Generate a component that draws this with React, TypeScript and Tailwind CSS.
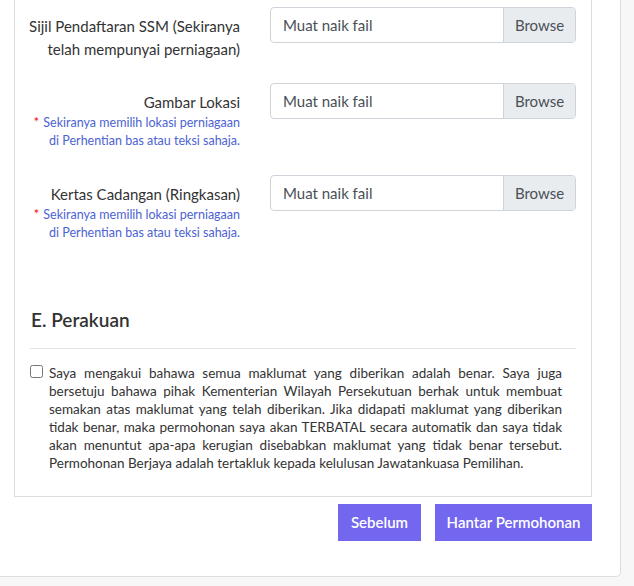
import React from "react";

const font = { fontFamily: "Lato, 'Open Sans', sans-serif" };

function FileInput() {
  return (
    <div className="flex h-[36px] w-[306px] overflow-hidden rounded-[4px] border border-[#ced4da] bg-white">
      <div className="flex flex-1 items-center pl-[12px] text-[15px] text-[#495057]">Muat naik fail</div>
      <div className="flex w-[72px] items-center justify-center border-l border-[#ced4da] bg-[#e9ecef] text-[15px] text-[#495057]">
        Browse
      </div>
    </div>
  );
}

function Note() {
  return (
    <div className="text-[12.5px] leading-[18px] text-[#4c63d2]">
      <div>
        <span className="mr-[1px] text-[#ff0000]">*</span> Sekiranya memilih lokasi perniagaan
      </div>
      <div>di Perhentian bas atau teksi sahaja.</div>
    </div>
  );
}

const lines = [
  "Saya mengakui bahawa semua maklumat yang diberikan adalah benar. Saya juga",
  "bersetuju bahawa pihak Kementerian Wilayah Persekutuan berhak untuk membuat",
  "semakan atas maklumat yang telah diberikan. Jika didapati maklumat yang diberikan",
  "tidak benar, maka permohonan saya akan TERBATAL secara automatik dan saya tidak",
  "akan menuntut apa-apa kerugian disebabkan maklumat yang tidak benar tersebut.",
];

export default function App() {
  return (
    <div className="h-[586px] w-[634px] overflow-hidden bg-[#f7f7f7]" style={font}>
      <div className="h-[577px] w-[621px] rounded-br-[5px] border-r border-b border-[#dddddd] bg-white">
        <div className="ml-[14px] h-[497px] w-[578px] border-x border-b border-[#dddddd] pt-[7px]">
          <div className="flex flex-col">
            <div className="mb-[22px] flex items-start">
              <div className="w-[225px] pt-[8px] text-right text-[15px] leading-[23px] text-[#333333]">
                Sijil Pendaftaran SSM (Sekiranya telah mempunyai perniagaan)
              </div>
              <div className="ml-[30px]">
                <FileInput />
              </div>
            </div>
            <div className="mb-[25px] flex items-start">
              <div className="w-[225px] pt-[8px] text-right text-[15px] leading-[23px] text-[#333333]">
                Gambar Lokasi
                <Note />
              </div>
              <div className="ml-[30px]">
                <FileInput />
              </div>
            </div>
            <div className="flex items-start">
              <div className="w-[225px] pt-[8px] text-right text-[15px] leading-[23px] text-[#333333]">
                Kertas Cadangan (Ringkasan)
                <Note />
              </div>
              <div className="ml-[30px]">
                <FileInput />
              </div>
            </div>
          </div>
          <div className="ml-[15px] mr-[15px] mt-[66px] border-b border-[#e5e5e5] pb-[16px]">
            <h2 className="pl-[1px] text-[19px] font-semibold leading-[24px] text-[#333333]">E. Perakuan</h2>
          </div>
          <div className="mt-[15px] flex items-start pl-[15px] pr-[29px]">
            <input type="checkbox" className="mt-[1px] h-[13px] w-[13px] shrink-0" />
            <div className="ml-[6px] flex-1 text-[13.5px] leading-[18px] text-[#333333]">
              {lines.map((l) => (
                <div key={l} className="text-justify [text-align-last:justify]">
                  {l}
                </div>
              ))}
              <div>Permohonan Berjaya adalah tertakluk kepada kelulusan Jawatankuasa Pemilihan.</div>
            </div>
          </div>
        </div>
        <div className="mt-[7px] flex w-[592px] justify-end gap-[14px]">
          <button className="h-[37px] w-[83px] bg-[#7367f0] text-[15px] font-semibold text-white">Sebelum</button>
          <button className="h-[37px] w-[157px] bg-[#7367f0] text-[15px] font-semibold text-white">Hantar Permohonan</button>
        </div>
      </div>
    </div>
  );
}
